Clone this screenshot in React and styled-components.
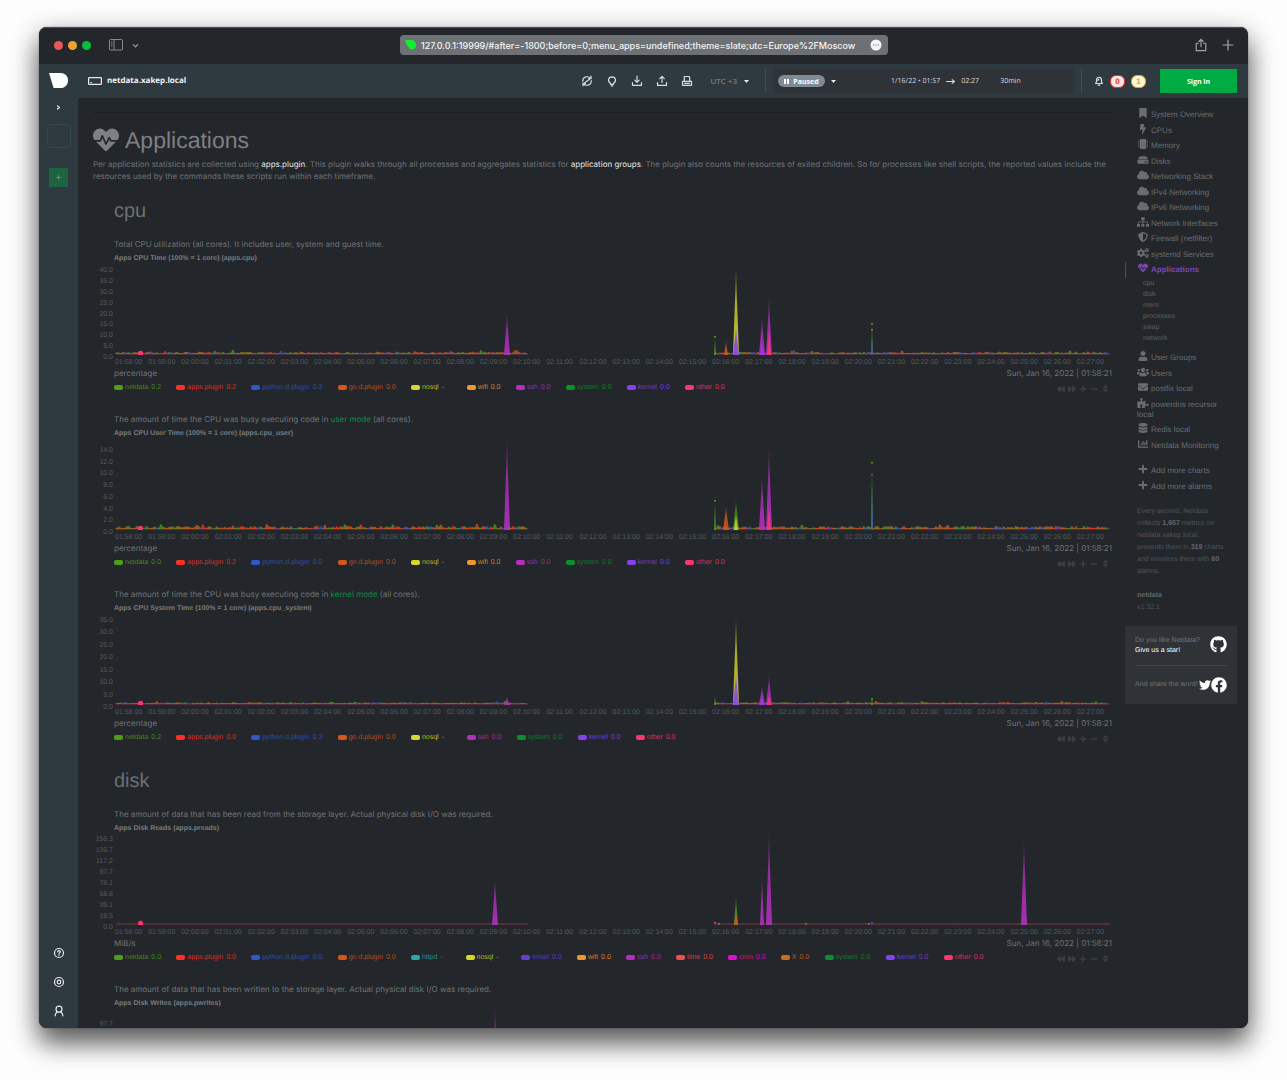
import React from "react";
import styled, { createGlobalStyle } from "styled-components";
import {
    FaBookmark, FaBolt, FaMicrochip, FaHdd, FaCloud, FaSitemap, FaShieldAlt, FaCogs,
    FaHeartbeat, FaUser, FaUsers, FaEnvelope, FaPuzzlePiece, FaDatabase, FaChartBar,
    FaPlus, FaMinus, FaBackward, FaForward, FaSort, FaGithub, FaTwitter, FaFacebook,
} from "react-icons/fa";

const GlobalStyle = createGlobalStyle`
    * {
        box-sizing: border-box;
    }
    body {
        margin: 0;
        background: #fdfdfd;
        font-family: "Liberation Sans", Arial, sans-serif;
        font-size: 8px;
        color: #6f7377;
        text-rendering: geometricPrecision;
    }
    h1, h2, h3, p, ul, dl {
        margin: 0;
        padding: 0;
    }
    button {
        display: inline-flex;
        align-items: center;
        justify-content: center;
        padding: 0;
        border: none;
        background: none;
        color: inherit;
        font: inherit;
    }
    a {
        color: inherit;
        text-decoration: none;
    }
    svg {
        display: block;
        flex: none;
    }
`

const Desktop = styled.div`
    height: 100vh;
    padding: 27px 39px 52px;
    overflow: hidden;
`

const Window = styled.div`
    display: flex;
    flex-direction: column;
    height: 100%;
    overflow: hidden;
    border-radius: 8px;
    background: #23272b;
    box-shadow: 0 0 1px #111111, 0 16px 26px rgba(0, 0, 0, 0.55), 0 6px 28px rgba(0, 0, 0, 0.25);
`

/* browser bar */

const TitleBar = styled.div`
    display: grid;
    grid-template-columns: 1fr auto 1fr;
    align-items: center;
    flex: none;
    height: 37px;
    padding: 0 14px 2px 15px;
    border-top: 1px solid #4c4f53;
    color: #a3a5a8;
`

const BarSide = styled.div`
    display: flex;
    align-items: center;
    justify-content: ${(props) => props.$end ? "flex-end" : "flex-start"};
    gap: ${(props) => props.$end ? "14px" : "5px"};
`

const Light = styled.span`
    width: 9px;
    height: 9px;
    border-radius: 50%;
    background: ${(props) => props.$color};
`

const BarTools = styled.div`
    display: flex;
    align-items: center;
    gap: 9px;
    padding-left: 13px;
`

const UrlBar = styled.div`
    display: flex;
    align-items: center;
    gap: 4px;
    height: 20px;
    width: 488px;
    padding: 0 6px 0 5px;
    border-radius: 4px;
    background: #6d7074;
    color: #f4f4f5;
    input {
        flex: 1;
        min-width: 0;
        padding: 0;
        border: none;
        outline: none;
        background: none;
        color: inherit;
        font: 500 9px Inter, sans-serif;
    }
`

/* dashboard frame */

const Dashboard = styled.div`
    display: grid;
    grid-template-columns: 39px 1fr;
    flex: 1;
    min-height: 0;
`

const Sidebar = styled.aside`
    display: flex;
    flex-direction: column;
    align-items: center;
    padding: 9px 0 10px;
    background: #2f3a40;
    color: #e8eaeb;
`

const SideButton = styled.button`
    width: 20px;
    height: 14px;
    margin-top: ${(props) => props.$top || "15px"};
`

const SpaceBox = styled.button`
    width: 24px;
    height: 24px;
    margin-top: 10px;
    border: 1px solid #37474f;
    border-radius: 4px;
`

const AddSpace = styled.button`
    width: 19px;
    height: 19px;
    margin-top: 20px;
    background: #1c6540;
    color: #6f8d80;
`

const SideBottom = styled.div`
    display: flex;
    flex-direction: column;
    margin-top: auto;
`

const Page = styled.div`
    display: flex;
    flex-direction: column;
    min-width: 0;
    min-height: 0;
`

const Header = styled.header`
    display: flex;
    align-items: center;
    flex: none;
    height: 34px;
    padding: 0 11px 0 10px;
    background: #2f3a40;
    color: #d9dcde;
    font-family: "Open Sans", sans-serif;
`

const Host = styled.div`
    display: flex;
    align-items: center;
    gap: 5px;
    margin-right: auto;
    font-size: 8px;
    font-weight: 700;
    line-height: 10px;
    color: #f2f4f5;
`

const Tools = styled.div`
    display: flex;
    gap: 13px;
`

const Zone = styled.button`
    gap: 7px;
    margin: 0 16px 0 17px;
    color: #87929a;
    font-size: 8px;
    line-height: 10px;
`

const Divider = styled.span`
    width: 1px;
    height: 24px;
    background: #3c4d55;
`

const TimePanel = styled.div`
    display: flex;
    align-items: center;
    height: 24px;
    width: 300px;
    margin: 0 7px 0 8px;
    padding-left: 4px;
    background: #2f3338;
    font-size: 7px;
`

const Paused = styled.button`
    gap: 4px;
    width: 47px;
    height: 12px;
    margin-right: 6px;
    border-radius: 6px;
    background: #7f8b96;
    color: #ffffff;
    font-weight: 700;
`

const Range = styled.div`
    display: flex;
    align-items: center;
    gap: 6px;
    margin: 0 21px 0 55px;
`

const Alarms = styled.div`
    display: flex;
    align-items: center;
    gap: 6px;
    margin: 0 14px 0 12px;
`

const Badge = styled.span`
    display: flex;
    align-items: center;
    justify-content: center;
    width: 15px;
    height: 13px;
    border: 1px solid ${(props) => props.$color};
    border-radius: 6px;
    background: ${(props) => props.$fill};
    color: ${(props) => props.$color};
    font-family: "Liberation Sans", sans-serif;
    font-size: 8px;
    font-weight: 700;
    line-height: 11px;
`

const SignIn = styled.button`
    width: 77px;
    height: 24px;
    background: #00ab44;
    color: #ffffff;
    font-size: 7px;
    font-weight: 700;
`

const Body = styled.div`
    display: grid;
    grid-template-columns: 1fr 112px;
    gap: 13px;
    flex: 1;
    min-height: 0;
    padding: 0 11px 0 15px;
    overflow: hidden;
`

/* charts */

const Main = styled.main`
    display: flex;
    flex-direction: column;
    min-width: 0;
    padding-top: 14px;
`

const Intro = styled.section`
    padding-top: 14px;
    border-top: 1px solid #1b1e22;
    p {
        margin: 5px 0 11px;
        font-family: Inter, sans-serif;
        font-size: 8px;
        line-height: 12px;
    }
    a {
        color: #e6e7e8;
    }
`

const Title = styled.h1`
    display: flex;
    align-items: center;
    gap: 6px;
    color: #7c8084;
    font-size: 23px;
    font-weight: 400;
    line-height: 24px;
`

const SubTitle = styled.h2`
    margin: 6px 0 15px;
    padding-left: 21px;
    color: #6b6f73;
    font-size: 20px;
    font-weight: 400;
    line-height: 24px;
`

const ChartBlock = styled.section`
    margin-bottom: 20px;
    > p {
        padding-left: 21px;
        font-family: Inter, sans-serif;
        font-size: 8px;
        line-height: 12px;
    }
    > p a {
        color: #0a8f45;
    }
    h3 {
        margin-top: 4px;
        padding-left: 21px;
        font-size: 7px;
        line-height: 10px;
        color: #777b7f;
    }
`

const Plot = styled.div`
    display: grid;
    grid-template-columns: 21px 1fr;
`

const YAxis = styled.div`
    grid-row: 1 / 3;
    display: flex;
    flex-direction: column;
    justify-content: space-between;
    padding: ${(props) => props.$top}px 1px 5px 0;
    color: #55595d;
    font-size: 7px;
    line-height: 8px;
    text-align: right;
`

const Canvas = styled.svg`
    width: 100%;
    height: 91px;
`

const XAxis = styled.div`
    display: grid;
    grid-template-columns: repeat(30, 1fr);
    padding: 3px 2px 0 1px;
    color: #55595d;
    font-size: 7px;
    line-height: 9px;
`

const Units = styled.div`
    display: flex;
    justify-content: space-between;
    padding-left: 21px;
    font-family: Inter, sans-serif;
    font-size: 8px;
    line-height: 12px;
`

const LegendRow = styled.div`
    display: flex;
    align-items: center;
    justify-content: space-between;
    margin-top: 3px;
    padding-left: 21px;
`

const Legend = styled.ul`
    display: flex;
    gap: 15px;
    list-style: none;
    font-size: 7px;
    line-height: 10px;
`

const LegendItem = styled.li`
    display: flex;
    align-items: center;
    color: ${(props) => props.$color};
    span {
        opacity: 0.8;
    }
    span:last-child {
        min-width: 10px;
        margin-left: 3px;
    }
    &:before {
        content: "";
        width: 9px;
        height: 5px;
        margin-right: 2px;
        border-radius: 2px;
        background: ${(props) => props.$color};
    }
`

const Controls = styled.div`
    display: flex;
    gap: 3px;
    padding: 2px 2px 0 0;
    color: #3a3e42;
`

/* right menu */

const Menu = styled.nav`
    padding-top: 12px;
`

const MenuList = styled.div`
    display: flex;
    flex-direction: column;
    justify-content: space-between;
    min-height: ${(props) => props.$height}px;
    margin-bottom: ${(props) => props.$gap}px;
`

const MenuLink = styled.a`
    margin: -3px 0;
    padding: 3px 8px 3px 11px;
    border-left: 1px solid ${(props) => props.$active ? "#5f3d86" : "transparent"};
    color: ${(props) => props.$active ? "#7b46b4" : "#696d71"};
    font-size: 8px;
    font-weight: ${(props) => props.$active ? 700 : 400};
    line-height: 10px;
    svg {
        display: inline-block;
        width: 12px;
        height: 10px;
        margin: -2px 2px 0 0;
        vertical-align: -1px;
    }
`

const SubMenu = styled.div`
    display: flex;
    flex-direction: column;
    margin-bottom: 9px;
    padding-left: 18px;
    font-size: 7px;
    line-height: 11px;
    color: #5b5f63;
`

const Stats = styled.p`
    padding-left: 12px;
    color: #505458;
    font-size: 7px;
    line-height: 12px;
    b {
        color: #63676b;
    }
`

const Version = styled(Stats)`
    margin: 12px 0;
`

const ShareCard = styled.div`
    padding: 10px 10px 11px;
    background: #2f3338;
    font-size: 7px;
    line-height: 10px;
    color: #6f7377;
    a {
        color: #ffffff;
    }
`

const ShareRow = styled.div`
    display: flex;
    align-items: ${(props) => props.$border ? "flex-start" : "center"};
    justify-content: space-between;
    padding-top: ${(props) => props.$border ? "0" : "11px"};
    padding-bottom: ${(props) => props.$border ? "9px" : "0"};
    border-bottom: ${(props) => props.$border ? "1px solid #3a484f" : "none"};
    white-space: nowrap;
`

const Icons = styled.span`
    display: flex;
    align-items: center;
    margin-left: -8px;
`

const C = {
    green: "#4d9e1a",
    red: "#fe3023",
    blue: "#3058c8",
    orange: "#d6551c",
    yellow: "#d5d72a",
    amber: "#f0962c",
    magenta: "#b52fbf",
    forest: "#0b8f2a",
    purple: "#8441ee",
    pink: "#fa3572",
    teal: "#2ca6a6",
    violet: "#6540d0",
    coral: "#ee4e50",
    fuchsia: "#e010d0",
    brown: "#cc6c1c",
}

const BASE = 90;

const MINUTES = Array.from({ length: 30 }, (_, i) => {
    const minute = 118 + i;
    return `0${Math.floor(minute / 60)}:${String(minute % 60).padStart(2, "0")}:00`;
})

// small fixed-seed generator, the idle load looks the same on each render
function random(seed) {
    let s = seed;
    return () => {
        s = (s * 16807) % 2147483647;
        return s / 2147483647;
    }
}

function idleLoad(seed, level) {
    const next = random(seed);
    const paths = { [C.green]: "", [C.orange]: "", [C.red]: "", [C.blue]: "" };
    const colors = [C.green, C.orange, C.green, C.orange, C.orange, C.green, C.red, C.green, C.blue];
    const runs = [[2, 412], [601, 993]];
    runs.forEach(([from, to]) => {
        for (let x = from; x < to; x += 2) {
            const color = colors[Math.floor(next() * colors.length)];
            const burst = next() > 0.88 ? 1.8 : 1;
            const h = (0.6 + next() * level) * burst;
            paths[color] += `M${x - 1},${BASE}L${x},${(BASE - h).toFixed(1)}L${x + 2},${(BASE - h * 0.8).toFixed(1)}L${x + 3},${BASE}Z`;
        }
    })
    return paths;
}

function Spike({ id, x, top, color, width = 3, base = BASE + 1 }) {
    const shoulder = top + (base - top) * 0.3;
    return (
        <>
            <linearGradient id={id} gradientUnits="userSpaceOnUse" x1="0" y1={top} x2="0" y2={base}>
                <stop offset="0" stopColor={color} stopOpacity="0.3" />
                <stop offset="0.4" stopColor={color} stopOpacity="0.75" />
                <stop offset="1" stopColor={color} stopOpacity="0.9" />
            </linearGradient>
            <path d={`M${x - width},${base}L${x - width * 0.25},${shoulder}L${x},${top}L${x + width * 0.25},${shoulder}L${x + width},${base}Z`} fill={`url(#${id})`} />
        </>
    )
}

function Chart({ id, text, link, tail, title, ticks, top, seed, level, spikes, dots = [], units, legend }) {
    const load = level ? idleLoad(seed, level) : {};
    return (
        <ChartBlock>
            <p>{text}{link && <a href="#mode">{link}</a>}{tail}</p>
            <h3>{title}</h3>
            <Plot>
                <YAxis $top={top}>
                    {ticks.map((tick) => <span key={tick}>{tick}</span>)}
                </YAxis>
                <Canvas viewBox="0 0 998 91" preserveAspectRatio="none" role="img" aria-label={title}>
                    {MINUTES.map((m, i) => (
                        <path key={m} d={`M${14.5 + i * 33.16},0V90`} stroke="#25292d" strokeWidth="1" />
                    ))}
                    {[15, 26, 37, 47, 58, 69, 80].map((y) => (
                        <path key={y} d={`M1,${y}.5H996`} stroke="#25292d" strokeWidth="1" />
                    ))}
                    <path d="M2,90H414M600,90H996" stroke="#a8405a" strokeWidth="1" strokeOpacity="0.7" />
                    {Object.keys(load).map((color) => (
                        <path key={color} d={load[color]} fill={color} fillOpacity="0.75" />
                    ))}
                    {spikes.map(([x, y, color, width], i) => (
                        <Spike key={i} id={`${id}-${i}`} x={x} top={y} color={color} width={width} />
                    ))}
                    {dots.map(([x, y, color]) => (
                        <rect key={`${x}-${y}`} x={x - 1} y={y} width="2" height="1.5" fill={color} />
                    ))}
                    <path d="M24,91V88.6Q24,86.8 26.5,86.8Q29,86.8 29,88.6V91Z" fill={C.pink} />
                </Canvas>
                <XAxis>
                    {MINUTES.map((m) => <span key={m}>{m}</span>)}
                </XAxis>
            </Plot>
            <Units>
                <span>{units}</span>
                <span>Sun, Jan 16, 2022 | 01:58:21</span>
            </Units>
            <LegendRow>
                <Legend>
                    {legend.map(([name, value, color]) => (
                        <LegendItem key={name} $color={color}>
                            <span>{name}</span>
                            <span>{value}</span>
                        </LegendItem>
                    ))}
                </Legend>
                <Controls>
                    <button aria-label="Pan left"><FaBackward size={8} /></button>
                    <button aria-label="Pan right"><FaForward size={8} /></button>
                    <button aria-label="Zoom in"><FaPlus size={8} /></button>
                    <button aria-label="Zoom out"><FaMinus size={8} /></button>
                    <button aria-label="Resize"><FaSort size={9} /></button>
                </Controls>
            </LegendRow>
        </ChartBlock>
    )
}

const cpuCharts = [
    {
        id: "cpu",
        text: "Total CPU utilization (all cores). It includes user, system and guest time.",
        title: "Apps CPU Time (100% = 1 core) (apps.cpu)",
        ticks: ["40.0", "35.0", "30.0", "25.0", "20.0", "15.0", "10.0", "5.0", "0.0"],
        top: 3,
        seed: 71,
        level: 1.8,
        units: "percentage",
        spikes: [
            [393, 50, C.magenta], [601, 72, C.green, 1], [612, 77, C.orange, 2],
            [622, 3, C.yellow], [622, 62, C.purple, 3], [648, 54, C.magenta, 3], [648, 76, C.purple, 2],
            [655, 34, C.magenta, 3], [655, 62, C.pink, 2], [758, 60, C.green, 1], [758, 70, C.blue, 1],
        ],
        dots: [[601, 72, C.green], [758, 59, C.green], [758, 65, C.coral]],
        legend: [
            ["netdata", "0.2", C.green], ["apps.plugin", "0.2", C.red], ["python.d.plugin", "0.3", C.blue],
            ["go.d.plugin", "0.0", C.orange], ["nosql", "-", C.yellow], ["wifi", "0.0", C.amber],
            ["ssh", "0.0", C.magenta], ["system", "0.0", C.forest], ["kernel", "0.0", C.purple], ["other", "0.0", C.pink],
        ],
    },
    {
        id: "user",
        text: "The amount of time the CPU was busy executing code in ",
        link: "user mode",
        tail: " (all cores).",
        title: "Apps CPU User Time (100% = 1 core) (apps.cpu_user)",
        ticks: ["14.0", "12.0", "10.0", "8.0", "6.0", "4.0", "2.0", "0.0"],
        top: 8,
        seed: 903,
        level: 2.6,
        units: "percentage",
        spikes: [
            [393, 1, C.magenta], [601, 61, C.green, 1], [612, 67, C.orange], [622, 61, C.green],
            [622, 76, C.yellow, 2], [648, 38, C.magenta], [655, 9, C.magenta], [655, 64, C.pink, 2],
            [758, 25, C.green, 1], [758, 40, C.blue, 1],
        ],
        dots: [[601, 61, C.green], [758, 23, C.green], [758, 35, C.violet]],
        legend: [
            ["netdata", "0.0", C.green], ["apps.plugin", "0.2", C.red], ["python.d.plugin", "0.0", C.blue],
            ["go.d.plugin", "0.0", C.orange], ["nosql", "-", C.yellow], ["wifi", "0.0", C.amber],
            ["ssh", "0.0", C.magenta], ["system", "0.0", C.forest], ["kernel", "0.0", C.purple], ["other", "0.0", C.pink],
        ],
    },
    {
        id: "system",
        text: "The amount of time the CPU was busy executing code in ",
        link: "kernel mode",
        tail: " (all cores).",
        title: "Apps CPU System Time (100% = 1 core) (apps.cpu_system)",
        ticks: ["35.0", "30.0", "25.0", "20.0", "15.0", "10.0", "5.0", "0.0"],
        top: 3,
        seed: 4410,
        level: 1.2,
        units: "percentage",
        spikes: [
            [393, 83, C.magenta], [601, 82, C.green, 1], [622, 3, C.yellow], [622, 58, C.purple, 3],
            [648, 72, C.magenta], [648, 80, C.purple, 2], [655, 62, C.magenta, 3], [655, 80, C.pink, 2], [758, 83, C.green, 1],
        ],
        dots: [[758, 84, C.green]],
        legend: [
            ["netdata", "0.2", C.green], ["apps.plugin", "0.0", C.red], ["python.d.plugin", "0.3", C.blue],
            ["go.d.plugin", "0.0", C.orange], ["nosql", "-", C.yellow], ["ssh", "0.0", C.magenta],
            ["system", "0.0", C.forest], ["kernel", "0.0", C.purple], ["other", "0.0", C.pink],
        ],
    },
]

const diskLegend = [
    ["netdata", "0.0", C.green], ["apps.plugin", "0.0", C.red], ["python.d.plugin", "0.0", C.blue],
    ["go.d.plugin", "0.0", C.orange], ["httpd", "-", C.teal], ["nosql", "-", C.yellow],
    ["email", "0.0", C.violet], ["wifi", "0.0", C.amber], ["ssh", "0.0", C.magenta], ["time", "0.0", C.coral],
    ["cron", "0.0", C.fuchsia], ["X", "0.0", C.brown], ["system", "0.0", C.forest], ["kernel", "0.0", C.purple],
    ["other", "0.0", C.pink],
]

const diskCharts = [
    {
        id: "reads",
        text: "The amount of data that has been read from the storage layer. Actual physical disk I/O was required.",
        title: "Apps Disk Reads (apps.preads)",
        ticks: ["156.3", "136.7", "117.2", "97.7", "78.1", "58.6", "39.1", "19.5", "0.0"],
        top: 2,
        units: "MiB/s",
        spikes: [
            [381, 46, C.magenta], [622, 62, C.green, 2], [622, 78, C.orange, 2],
            [648, 43, C.magenta, 2], [655, -1, C.magenta], [910, 6, C.magenta],
        ],
        dots: [[601, 88, C.pink], [605, 89, C.green], [692, 89, C.orange], [755, 89, C.pink], [758, 88, C.violet]],
        legend: diskLegend,
    },
    {
        id: "writes",
        text: "The amount of data that has been written to the storage layer. Actual physical disk I/O was required.",
        title: "Apps Disk Writes (apps.pwrites)",
        ticks: ["97.7", "78.1", "58.6", "39.1", "19.5", "0.0"],
        top: 12,
        units: "MiB/s",
        spikes: [[381, 0, C.magenta, 4]],
        legend: diskLegend,
    },
]

const menuTop = [
    [FaBookmark, "System Overview"], [FaBolt, "CPUs"], [FaMicrochip, "Memory"], [FaHdd, "Disks"],
    [FaCloud, "Networking Stack"], [FaCloud, "IPv4 Networking"], [FaCloud, "IPv6 Networking"],
    [FaSitemap, "Network Interfaces"], [FaShieldAlt, "Firewall (netfilter)"], [FaCogs, "systemd Services"],
    [FaHeartbeat, "Applications"],
]

const menuBottom = [
    [FaUser, "User Groups"], [FaUsers, "Users"], [FaEnvelope, "postfix local"],
    [FaPuzzlePiece, "powerdns recursor local"], [FaDatabase, "Redis local"], [FaChartBar, "Netdata Monitoring"],
]

const menuAdd = [[FaPlus, "Add more charts"], [FaPlus, "Add more alarms"]]

function Links({ items, height, gap }) {
    return (
        <MenuList $height={height} $gap={gap}>
            {items.map(([Icon, label]) => (
                <MenuLink key={label} href="#menu" $active={label === "Applications"}>
                    <Icon />{label}
                </MenuLink>
            ))}
        </MenuList>
    )
}

function Line({ size = 12, width = 1.6, children }) {
    return (
        <svg width={size} height={size} viewBox="0 0 16 16" fill="none" stroke="currentColor"
            strokeWidth={width} strokeLinecap="round" strokeLinejoin="round">
            {children}
        </svg>
    )
}

function Caret() {
    return (
        <svg width="5" height="3" viewBox="0 0 5 3" fill="#e8eaeb">
            <path d="M0,0H5L2.5,3Z" />
        </svg>
    )
}

function BrowserBar() {
    return (
        <TitleBar>
            <BarSide>
                <Light $color="#ee5558" />
                <Light $color="#f1a22e" />
                <Light $color="#06c03d" />
                <BarTools>
                    <button aria-label="Sidebar">
                        <svg width="14" height="12" viewBox="0 0 14 12" fill="none" stroke="#85888c">
                            <rect x="0.5" y="0.5" width="13" height="10.5" rx="1" />
                            <path d="M5,0.5V11M2,3H3.5M2,5H3.5M2,7H3.5" />
                        </svg>
                    </button>
                    <button aria-label="Tab groups">
                        <Line size={7} width={2.6}><path d="M3,6L8,11L13,6" /></Line>
                    </button>
                </BarTools>
            </BarSide>
            <UrlBar>
                <svg width="12" height="10" viewBox="0 0 12 10">
                    <path d="M0,0H7Q10,0.4 11.5,5Q10,9.5 7,9.5H5.5L2,5.5Z" fill="#0ff02c" />
                </svg>
                <input aria-label="Address" readOnly value="127.0.0.1:19999/#after=-1800;before=0;menu_apps=undefined;theme=slate;utc=Europe%2FMoscow" />
                <button aria-label="Page options">
                    <svg width="12" height="12" viewBox="0 0 12 12">
                        <circle cx="6" cy="6" r="5.5" fill="#f4f4f5" />
                        <path d="M3,6H4.2M5.4,6H6.6M7.8,6H9" stroke="#6d7074" strokeWidth="1.2" />
                    </svg>
                </button>
            </UrlBar>
            <BarSide $end>
                <button aria-label="Share">
                    <Line size={14} width={1.3}><path d="M5,6H2.5V14.5H13.5V6H11M8,10V1.5M5.5,4L8,1.5L10.5,4" /></Line>
                </button>
                <button aria-label="New tab">
                    <Line size={12} width={1.6}><path d="M8,1.5V14.5M1.5,8H14.5" /></Line>
                </button>
            </BarSide>
        </TitleBar>
    )
}

function SideRail() {
    return (
        <Sidebar>
            <svg width="19" height="15" viewBox="0 0 19 15">
                <path d="M0,0H11.5C16,0 19,3.2 19,7.4C19,11.8 16,15 11.5,15H4.6Z" fill="#ffffff" />
            </svg>
            <SideButton $top="12px" aria-label="Expand">
                <Line size={5} width={4}><path d="M5,3L11,8L5,13" /></Line>
            </SideButton>
            <SpaceBox aria-label="Space" />
            <AddSpace aria-label="Add space"><FaPlus size={5} /></AddSpace>
            <SideBottom>
                <SideButton aria-label="Help">
                    <Line><circle cx="8" cy="8" r="6" /><path d="M6.2,6.4C6.2,4.2 9.8,4.2 9.8,6.4C9.8,7.8 8,7.6 8,9.2M8,11.2V11.4" /></Line>
                </SideButton>
                <SideButton aria-label="Settings">
                    <Line><circle cx="8" cy="8" r="6" /><circle cx="8" cy="8" r="2.4" /></Line>
                </SideButton>
                <SideButton aria-label="Account">
                    <Line><circle cx="8" cy="5.6" r="4" /><path d="M2.8,14.5C3,11.5 4.4,10 6,9.2M13.2,14.5C13,11.5 11.6,10 10,9.2" /></Line>
                </SideButton>
            </SideBottom>
        </Sidebar>
    )
}

function TopHeader() {
    return (
        <Header>
            <Host>
                <svg width="14" height="8" viewBox="0 0 14 8" fill="none" stroke="#e8eaeb" strokeWidth="1.2">
                    <rect x="0.6" y="0.6" width="12.8" height="6.8" rx="0.6" />
                    <path d="M2.5,5.5H4" />
                </svg>
                netdata.xakep.local
            </Host>
            <Tools>
                <button aria-label="Refresh">
                    <Line><path d="M2.4,8.4C2.2,1.8 10,0.8 13,4.6M13.4,1.6V4.8H10.2M13.6,7.6C13.8,14.2 6,15.2 3,11.4M2.6,14.4V11.2H5.8M11.4,5.6L4.6,10.6" /></Line>
                </button>
                <button aria-label="What is new">
                    <Line><path d="M6,11C2,9 2.6,2.6 8,2.4C13.4,2.6 14,9 10,11V12.6H6ZM7,14.6H9" /></Line>
                </button>
                <button aria-label="Import">
                    <Line><path d="M8,1.5V9.5M5,6.8L8,9.8L11,6.8M2,10V13.8H14V10" /></Line>
                </button>
                <button aria-label="Export">
                    <Line><path d="M8,10V2M5,4.8L8,1.8L11,4.8M2,10V13.8H14V10" /></Line>
                </button>
                <button aria-label="Print">
                    <Line><path d="M4.4,8V2H10.5L11.6,3.2V8M2,8.4H14V13.8H2ZM4.8,11.2H11.2" /></Line>
                </button>
            </Tools>
            <Zone>UTC +3 <Caret /></Zone>
            <Divider />
            <TimePanel>
                <Paused>
                    <svg width="5" height="5" viewBox="0 0 5 5" fill="#ffffff"><path d="M0,0H2V5H0ZM3,0H5V5H3Z" /></svg>
                    Paused
                </Paused>
                <button aria-label="Playback options"><Caret /></button>
                <Range>
                    <span>1/16/22 • 01:57</span>
                    <Line size={9} width={1.8}><path d="M1,8H15M11,4.5L15,8L11,11.5" /></Line>
                    <span>02:27</span>
                </Range>
                <span>30min</span>
            </TimePanel>
            <Divider />
            <Alarms>
                <button aria-label="Alarms">
                    <Line size={10} width={1.9}><path d="M2.5,12H13.5L12,9.5V6.5C12,0.5 4,0.5 4,6.5V9.5ZM6.5,14.5H9.5M8,5C6.8,5 6.4,6 6.4,7" /></Line>
                </button>
                <Badge $color="#e8302b" $fill="#ffe4e4">0</Badge>
                <Badge $color="#d8a62c" $fill="#fff6d6">1</Badge>
            </Alarms>
            <SignIn>Sign in</SignIn>
        </Header>
    )
}

function RightMenu() {
    return (
        <Menu>
            <Links items={menuTop} height={165} gap={3} />
            <SubMenu>
                {["cpu", "disk", "mem", "processes", "swap", "network"].map((name) => (
                    <a key={name} href="#sub">{name}</a>
                ))}
            </SubMenu>
            <Links items={menuBottom} height={98} gap={15} />
            <Links items={menuAdd} height={26} gap={14} />
            <Stats>
                Every second, Netdata<br />
                collects <b>1,657</b> metrics on<br />
                netdata.xakep.local,<br />
                presents them in <b>319</b> charts<br />
                and monitors them with <b>60</b><br />
                alarms.
            </Stats>
            <Version><b>netdata</b><br />v1.32.1</Version>
            <ShareCard>
                <ShareRow $border>
                    <span>Do you like Netdata?<br /><a href="#star">Give us a star!</a></span>
                    <a href="#github" aria-label="GitHub"><FaGithub size={17} /></a>
                </ShareRow>
                <ShareRow>
                    <span>And share the word!</span>
                    <Icons>
                        <a href="#twitter" aria-label="Twitter"><FaTwitter size={12} /></a>
                        <a href="#facebook" aria-label="Facebook"><FaFacebook size={16} /></a>
                    </Icons>
                </ShareRow>
            </ShareCard>
        </Menu>
    )
}

function App() {
    return (
        <Desktop>
            <GlobalStyle />
            <Window>
                <BrowserBar />
                <Dashboard>
                    <SideRail />
                    <Page>
                        <TopHeader />
                        <Body>
                            <Main>
                                <Intro>
                                    <Title><FaHeartbeat size={26} />Applications</Title>
                                    <p>
                                        Per application statistics are collected using <a href="#plugin">apps.plugin</a>. This plugin walks through all processes and aggregates statistics for <a href="#groups">application groups</a>. The plugin also counts the resources of exited children. So for processes like shell scripts, the reported values include the resources used by the commands these scripts run within each timeframe.
                                    </p>
                                </Intro>
                                <SubTitle>cpu</SubTitle>
                                {cpuCharts.map((chart) => <Chart key={chart.id} {...chart} />)}
                                <SubTitle>disk</SubTitle>
                                {diskCharts.map((chart) => <Chart key={chart.id} {...chart} />)}
                            </Main>
                            <RightMenu />
                        </Body>
                    </Page>
                </Dashboard>
            </Window>
        </Desktop>
    )
}

export default App;
